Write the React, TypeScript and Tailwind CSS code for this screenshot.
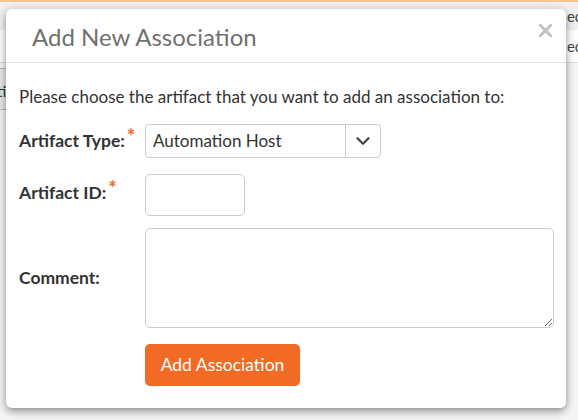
import { ChevronDown, X } from "lucide-react";

function Req() {
  return <span className="relative -top-[3px] ml-[2px] text-[20px] font-bold leading-none text-[#f26a23]">*</span>;
}

export default function App() {
  return (
    <div className="relative h-[420px] w-[578px] overflow-hidden bg-[#f5f5f5] font-['Lato','Liberation_Sans',sans-serif] text-[#333]">
      {/* page behind the dialog */}
      <div className="h-[2px] bg-[#f6c594]" />
      <div className="flex h-[28px] items-center justify-end bg-[#f0f0f0] text-[15px] text-[#444]">
        <span className="-mr-[4px]">ec</span>
      </div>
      <div className="flex h-[32px] items-center justify-end bg-white text-[15px] text-[#444]">
        <span className="-mr-[4px]">ec</span>
      </div>
      <div className="h-[6px] border-t border-[#ddd]" />
      <div className="flex h-[42px] w-[12px] items-center overflow-hidden border border-l-0 border-[#bbb] bg-[#e8e8e8] text-[15px]">
        <span className="-ml-[3px] mt-[4px]">ti</span>
      </div>

      {/* dialog */}
      <div className="absolute left-[6px] top-[9px] w-[560px] rounded-[6px] bg-white shadow-[0_3px_8px_rgba(0,0,0,0.45)]">
        <div className="flex h-[54px] items-center justify-between border-b border-[#e2e2e2] pl-[26px] pr-[10px]">
          <h2 className="pt-[2px] text-[24px] font-normal text-[#707070]">Add New Association</h2>
          <X size={21} strokeWidth={3.5} className="-mt-[10px] text-[#c2c2c2]" />
        </div>
        <div className="px-[13px] pb-[22px] pt-[22px]">
          <p className="text-[17px] leading-[24px]">Please choose the artifact that you want to add an association to:</p>
          <div className="mt-[15px] grid grid-cols-[126px_1fr] items-center gap-y-[12px]">
            <label className="text-[17.5px] font-bold">
              Artifact Type:<Req />
            </label>
            <div className="flex h-[34px] w-[236px] items-center rounded-[4px] border border-[#ccc]">
              <span className="flex-1 pl-[7px] text-[17px]">Automation Host</span>
              <span className="flex h-full w-[35px] items-center justify-center border-l border-[#ccc]">
                <ChevronDown size={22} strokeWidth={2.5} className="text-[#444]" />
              </span>
            </div>
            <label className="text-[17.5px] font-bold">
              Artifact ID:<Req />
            </label>
            <input className="mt-[4px] h-[42px] w-[100px] rounded-[5px] border border-[#ccc]" />
            <label className="text-[17.5px] font-bold">Comment:</label>
            <textarea className="h-[100px] w-[409px] rounded-[5px] border border-[#ccc]" />
            <div />
            <button className="mt-[4px] h-[42px] w-[155px] rounded-[5px] bg-[#f26a23] text-[17.5px] text-white">
              Add Association
            </button>
          </div>
        </div>
      </div>
    </div>
  );
}
